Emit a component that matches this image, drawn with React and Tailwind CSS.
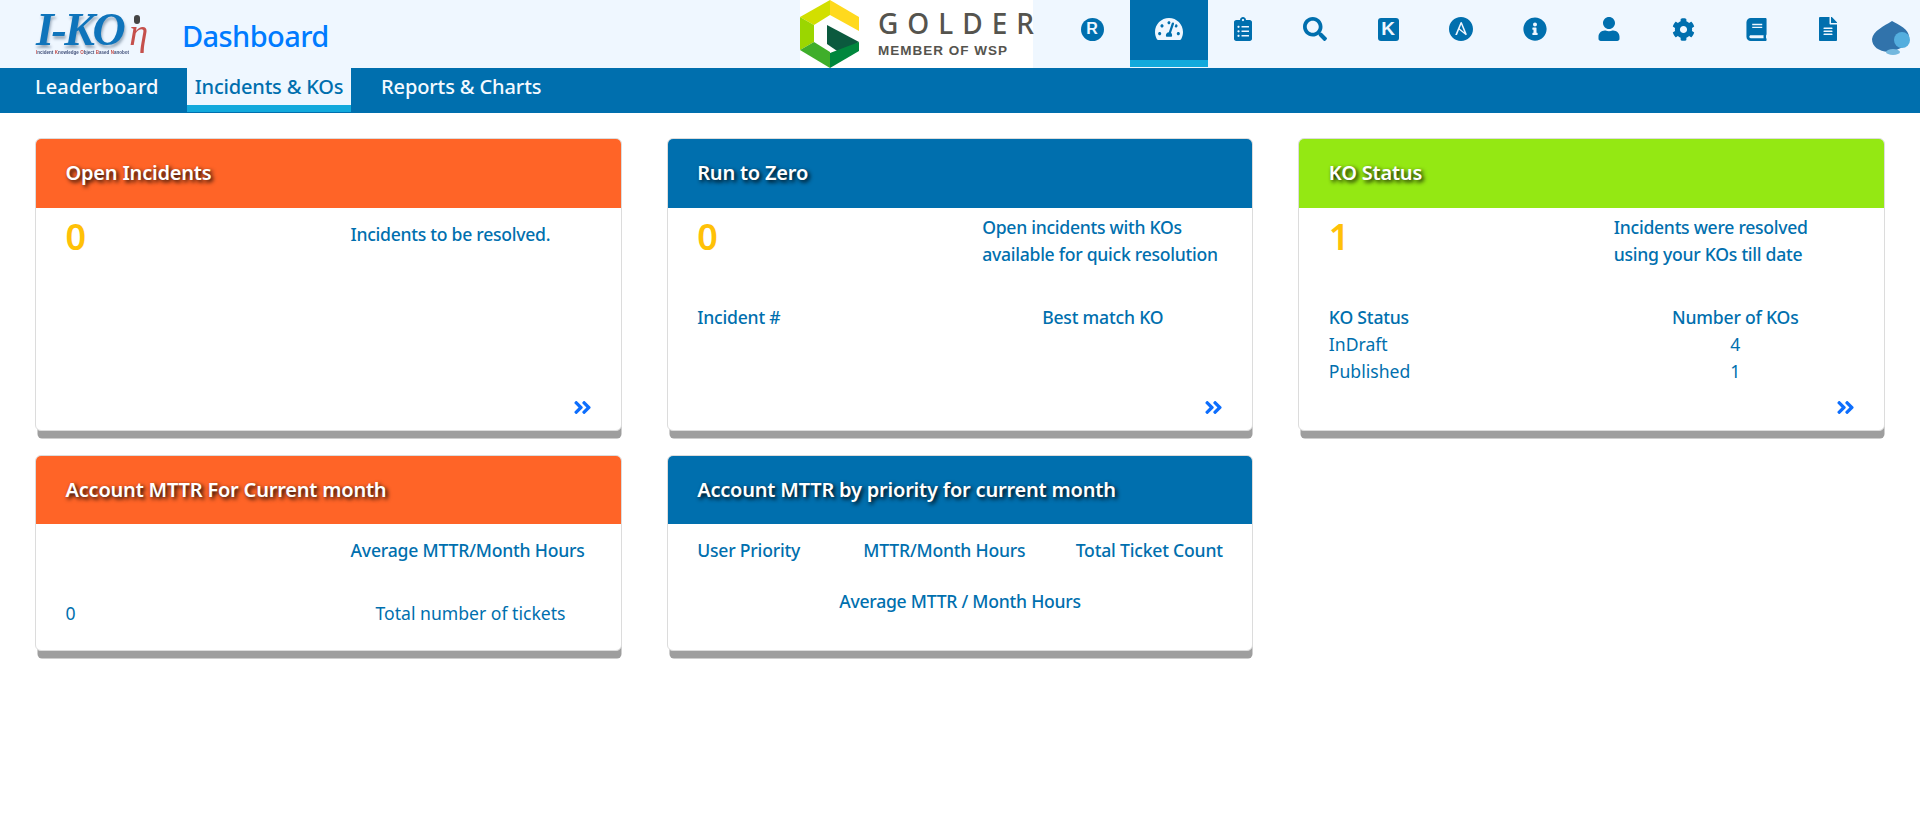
import React from "react";
import {
  FaAngleDoubleRight,
  FaBook,
  FaClipboardList,
  FaCog,
  FaFileAlt,
  FaInfoCircle,
  FaSearch,
  FaTachometerAlt,
  FaUser,
} from "react-icons/fa";
import { SiAnsible } from "react-icons/si";

const taglineWords = ["Incident", "Knowledge", "Object", "Based", "Nanobot"];

const IkonLogo = () => (
  <div className="relative h-[68px] w-[146px] shrink-0 blur-[0.3px]">
    <div className="absolute left-[36px] top-[10px] flex items-baseline whitespace-nowrap font-['Liberation_Serif',serif] italic">
      <span className="text-[46px] font-bold leading-[40px] tracking-[-2.5px] text-[#0f74bb] [text-shadow:1px_3px_3px_#9ab]">
        I-KO
      </span>
      <span className="ml-[6px] text-[38px] leading-[30px] text-[#c5504c]">η</span>
    </div>
    <div className="absolute left-[36px] top-[50px] flex gap-[1.5px] whitespace-nowrap font-['Liberation_Sans',sans-serif] text-[4.5px] font-bold leading-[6px] text-[#41507a]">
      {taglineWords.map((word) => (
        <span key={word}>
          <span className="text-[#c5504c]">{word[0]}</span>
          {word.slice(1)}
        </span>
      ))}
    </div>
    <div className="absolute left-[134px] top-[15px] h-[9px] w-[6px] rounded-full bg-[#444]" />
  </div>
);

const GolderLogo = () => (
  <div className="flex h-[68px] w-[233px] shrink-0 bg-white">
    <svg viewBox="0 0 60 68" className="h-[68px] w-[60px] shrink-0">
      <polygon points="30,0 0,17 14,25 30,15" fill="#d2df00" />
      <polygon points="30,0 59,17 59,31 30,15" fill="#ffd91e" />
      <polygon points="0,17 14,25 14,42 0,50" fill="#9bd600" />
      <polygon points="0,50 14,42 30,52 30,68" fill="#3fae2a" />
      <polygon points="27,25 59,42 40,53 27,44" fill="#0b5a3e" />
      <polygon points="59,42 59,51 30,68 30,53" fill="#00873d" />
    </svg>
    <div className="ml-[18px] flex flex-col whitespace-nowrap text-[#55544e]">
      <span className="mt-[4px] text-[28px] font-medium leading-[38px] tracking-[9px]">GOLDER</span>
      <span className="mt-[1px] font-['Liberation_Sans',sans-serif] text-[13.5px] font-bold leading-[16px] tracking-[1px]">
        MEMBER OF WSP
      </span>
    </div>
  </div>
);

const GlyphBadge = ({ letter, square }) => (
  <span
    className={`flex items-center justify-center bg-[#006fae] font-['Liberation_Sans',sans-serif] font-bold text-[#eff7ff] ${
      square ? "h-[23px] w-[21px] rounded-[3px] text-[19px]" : "size-[23px] rounded-full text-[16px]"
    }`}
  >
    {letter}
  </span>
);

const Avatar = () => (
  <svg viewBox="0 0 40 36" className="h-[36px] w-[40px] blur-[0.6px]">
    <path d="M21 1 C28 5 38 9 38 17 C38 27 26 30 17 32 C8 31 1 27 1 19 C2 11 13 6 21 1 Z" fill="#3173ab" />
    <circle cx="31" cy="20" r="8" fill="#54aede" />
    <ellipse cx="22" cy="32" rx="7" ry="3" fill="#74b8de" />
  </svg>
);

const navIcons = [
  { key: "r", width: "w-[76px]", node: <GlyphBadge letter="R" /> },
  { key: "gauge", width: "w-[78px]", active: true, node: <FaTachometerAlt size={28} color="#eff7ff" /> },
  { key: "tasks", width: "w-[70px]", node: <FaClipboardList size={24} /> },
  { key: "search", width: "w-[74px]", node: <FaSearch size={24} /> },
  { key: "ko", width: "w-[72px]", node: <GlyphBadge letter="K" square /> },
  { key: "ansible", width: "w-[74px]", node: <SiAnsible size={24} /> },
  { key: "info", width: "w-[74px]", node: <FaInfoCircle size={24} /> },
  { key: "user", width: "w-[74px]", node: <FaUser size={24} /> },
  { key: "cog", width: "w-[74px]", node: <FaCog size={23} /> },
  { key: "book", width: "w-[73px]", node: <FaBook size={23} /> },
  { key: "file", width: "w-[70px]", node: <FaFileAlt size={24} /> },
];

const Header = () => (
  <header className="flex h-[68px] items-stretch bg-[#eff7ff]">
    <div className="flex w-[800px] shrink-0">
      <IkonLogo />
      <div className="flex items-center pl-[36px] pt-[4px] text-[29px] font-medium tracking-[-0.6px] text-[#007bff]">
        Dashboard
      </div>
    </div>
    <GolderLogo />
    <div className="ml-[21px] flex">
      {navIcons.map((item) => (
        <div
          key={item.key}
          className={`flex items-center justify-center text-[#006fae] ${item.width} ${
            item.active
              ? "h-[67px] border-b-[7px] border-[#12a9dc] bg-[#006fae] pb-[2px]"
              : "h-[68px] pb-[10px]"
          }`}
        >
          {item.node}
        </div>
      ))}
      <div className="flex w-[48px] items-start justify-end pt-[20px]">
        <Avatar />
      </div>
    </div>
  </header>
);

const Tabs = () => (
  <nav className="flex h-[45px] items-start bg-[#006fae] pl-[35px] text-[20px] font-medium text-[#f4faff]">
    <div className="flex h-[44px] w-[152px] items-center pb-[6px] tracking-[0.1px]">Leaderboard</div>
    <div className="flex h-[44px] w-[164px] items-center justify-center border-b-[7px] border-[#12a9dc] bg-[#eff7ff] tracking-[-0.19px] text-[#006fae]">
      Incidents &amp; KOs
    </div>
    <div className="flex h-[44px] items-center pb-[6px] pl-[30px] tracking-[-0.12px]">Reports &amp; Charts</div>
  </nav>
);

const Card = ({ title, color, height, headerHeight, children }) => (
  <section
    className={`flex flex-col rounded-[6px] border border-[#dcdcdc] bg-white shadow-[1px_9px_0_-1.5px_#9e9e9e] ${height}`}
  >
    <div
      className={`flex shrink-0 items-center rounded-t-[5px] pl-[29.5px] text-[20px] font-semibold tracking-[-0.2px] text-white [text-shadow:2px_2px_4px_#000] ${headerHeight} ${color}`}
    >
      {title}
    </div>
    <div className="relative flex-1 px-[29.5px] text-[17.6px] leading-[27px] tracking-normal text-[#006fae]">
      {children}
    </div>
  </section>
);

const More = () => (
  <FaAngleDoubleRight size={21} className="absolute bottom-[12px] right-[28px] text-[#0d6efd]" />
);

const Summary = ({ value, lines, single }) => (
  <div className="grid grid-cols-[285px_1fr]">
    <div className="pt-[8px] text-[36px] font-semibold leading-[42px] tracking-normal text-[#ffc107]">{value}</div>
    <div className={`font-medium tracking-[-0.27px] ${single ? "pt-[13px]" : "pt-[6px]"}`}>
      {lines.map((line) => (
        <div key={line}>{line}</div>
      ))}
    </div>
  </div>
);

export default function App() {
  return (
    <div className="min-h-[825px] bg-white font-['Noto_Sans',sans-serif]">
      <Header />
      <Tabs />
      <main className="grid grid-cols-3 items-start gap-x-[45px] gap-y-[24px] px-[35px] pt-[25px]">
        <Card title="Open Incidents" color="bg-[#ff6427] pb-[2px]" height="h-[293px]" headerHeight="h-[69px]">
          <Summary value="0" lines={["Incidents to be resolved."]} single />
          <More />
        </Card>

        <Card title="Run to Zero" color="bg-[#006fae] pb-[2px]" height="h-[293px]" headerHeight="h-[69px]">
          <Summary value="0" lines={["Open incidents with KOs", "available for quick resolution"]} />
          <div className="mt-[36px] grid grid-cols-[285px_1fr] font-medium tracking-[-0.2px]">
            <div>Incident #</div>
            <div className="pl-[60px]">Best match KO</div>
          </div>
          <More />
        </Card>

        <Card title="KO Status" color="bg-[#94e813] pb-[2px]" height="h-[293px]" headerHeight="h-[69px]">
          <Summary value="1" lines={["Incidents were resolved", "using your KOs till date"]} />
          <div className="mt-[36px] grid grid-cols-[285px_1fr]">
            <div className="font-medium tracking-[-0.2px]">KO Status</div>
            <div className="w-[243px] text-center font-medium tracking-[-0.2px]">Number of KOs</div>
            <div>InDraft</div>
            <div className="w-[243px] text-center">4</div>
            <div>Published</div>
            <div className="w-[243px] text-center">1</div>
          </div>
          <More />
        </Card>

        <Card
          title="Account MTTR For Current month"
          color="bg-[#ff6427]"
          height="h-[196px] col-start-1"
          headerHeight="h-[68px]"
        >
          <div className="grid grid-cols-[285px_1fr] pt-[13px] tracking-[-0.2px]">
            <div />
            <div className="font-medium">Average MTTR/Month Hours</div>
          </div>
          <div className="mt-[36px] grid grid-cols-[285px_1fr]">
            <div>0</div>
            <div className="w-[240px] text-center">Total number of tickets</div>
          </div>
        </Card>

        <Card
          title="Account MTTR by priority for current month"
          color="bg-[#006fae]"
          height="h-[196px]"
          headerHeight="h-[68px]"
        >
          <div className="flex justify-between pt-[13px] font-medium tracking-[-0.2px]">
            <div>User Priority</div>
            <div className="ml-[13px]">MTTR/Month Hours</div>
            <div>Total Ticket Count</div>
          </div>
          <div className="mt-[24px] text-center font-medium tracking-[-0.25px]">Average MTTR / Month Hours</div>
        </Card>
      </main>
    </div>
  );
}
